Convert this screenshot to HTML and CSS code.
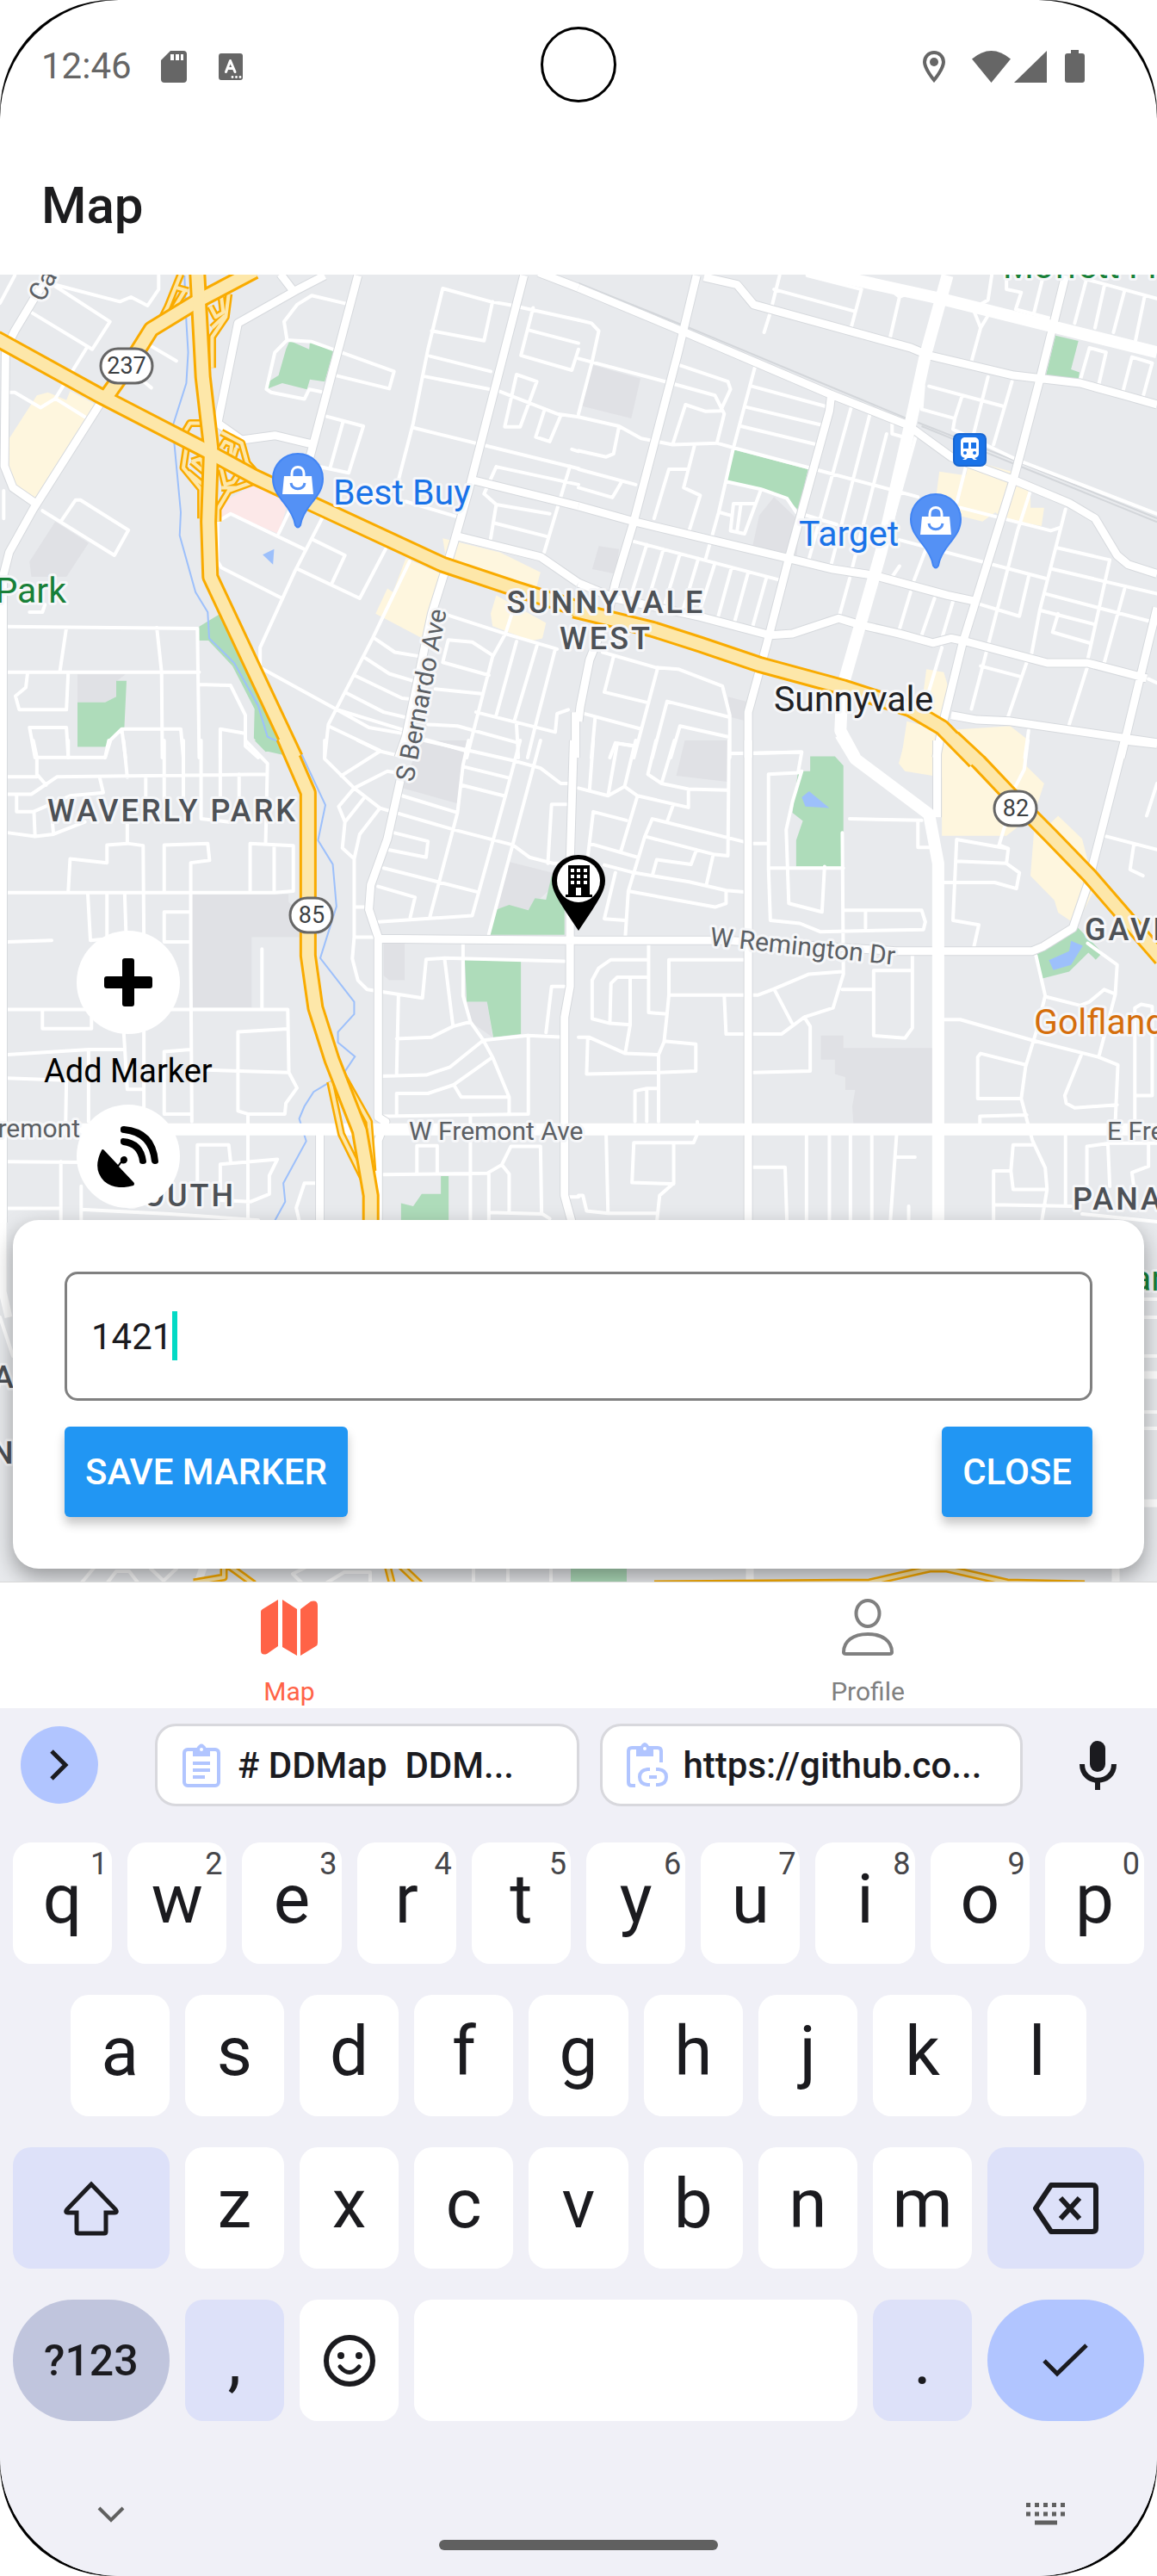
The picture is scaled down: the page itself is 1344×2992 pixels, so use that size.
FILE: index.html
```html
<!DOCTYPE html>
<html lang="en">
<head>
<meta charset="utf-8">
<meta name="viewport" content="width=device-width, initial-scale=1">
<title>Map</title>
<link rel="stylesheet" href="styles.css">
</head>
<body>
<div class="device">
<div class="screen">

<div class="status">
  <span class="time">12:46</span>
  <svg class="sd" viewBox="0 0 30 37" width="30" height="37"><path fill="#666" d="M11 0H26a4 4 0 0 1 4 4V33a4 4 0 0 1-4 4H4a4 4 0 0 1-4-4V11Z"/><path fill="#fff" d="M11 4h4v7h-4zM17 4h4v7h-4zM23 4h3v7h-3z"/></svg>
  <svg class="kb-a" viewBox="0 0 28 31" width="28" height="31"><rect width="28" height="31" rx="3" fill="#666"/><path d="M8.500 21.500 13.500 8.500 19 21.500M10.500 17.500H17" fill="none" stroke="#fff" stroke-width="3" stroke-linecap="round" stroke-linejoin="round"/><g fill="#fff"><circle cx="16" cy="27.500" r="1.400"/><circle cx="20.500" cy="27.500" r="1.400"/><circle cx="25" cy="27.500" r="1.400"/></g></svg>
  <span class="spacer"></span>
  <svg class="loc" viewBox="0 0 26 37" width="26" height="37"><path d="M13 2C7 2 2 6.500 2 13c0 8 11 21 11 21s11-13 11-21C24 6.500 19 2 13 2Z" fill="none" stroke="#666" stroke-width="4"/><circle cx="13" cy="13" r="5" fill="#666"/></svg>
  <svg class="wifi" viewBox="0 0 45 37" width="45" height="37"><path fill="#666" d="M0 9.500Q22.500-9.500 45 9.500L22.500 37Z"/></svg>
  <svg class="signal" viewBox="0 0 38 37" width="38" height="37"><path fill="#666" d="M38 0V37H0Z"/></svg>
  <svg class="battery" viewBox="0 0 23 38" width="23" height="38"><path fill="#666" d="M7 0h9v4h4a3 3 0 0 1 3 3v28a3 3 0 0 1-3 3H3a3 3 0 0 1-3-3V7a3 3 0 0 1 3-3h4z"/></svg>
  <span class="camera"></span>
</div>

<header class="header"><h1>Map</h1></header>

<main class="map">
<svg class="tiles" viewBox="0 319 1344 1518" preserveAspectRatio="xMidYMid slice" aria-label="Map of Sunnyvale">
<defs>
  <path id="nw-street" d="M150,30 325,85 355,70 400,98 430,45V0M85,120 250,240 298,150 150,35M235,235 150,400 110,430 40,380H20M150,400 230,460M410,230 478,278M385,340 410,365M40,0 0,90M10,700V790M940,92 845,65 805,95 770,150 778,210 845,215 1068,312 1055,368 910,325M778,210 745,250 722,370 735,380 825,402 838,370 870,378M1080,665 1120,480 1160,240 1200,42 1330,85 1380,95 1568,145M1335,85 1312,212 1170,180M1445,105 1412,260 1550,308 1568,240M1435,178 1568,220M1165,262 1330,312M1150,328 1350,375 1510,450 1568,460M1400,322 1455,345 1410,492 1368,492ZM1475,440 1452,525 1490,540 1520,455M1120,495 1568,628M1550,565 1568,572M885,458 985,490 945,642 860,620M930,475 895,625M1345,622 1568,680M1345,622 1312,710 1345,745 1330,855M1345,745 1490,775M1340,805 1480,848M1545,620 1475,900M1100,735 1240,785M115,765 310,910 348,828 218,730 205,730 165,800M590,800 625,775 825,890M785,765 755,840M875,785 800,960 705,1210V1275L910,1410 1100,1480M590,800V930L600,950 765,1050M850,860 935,910 900,1000M808,955 975,1050 1045,890M1110,930 1010,1180 890,1460 880,1568M20,1142 535,1148 540,1568M20,1290H540M180,1145 162,1290M425,1145 438,1290 440,1568M75,1290 70,1340 42,1368 52,1412H180L185,1290M95,1568 80,1470H180L185,1568M285,1568 300,1510 330,1475H490L497,1568M330,1475 340,1568M540,1330 625,1333 665,1430V1530L700,1568M597,1568V1475L660,1488M80,1095H115L122,1070M1190,1095 1370,1165 1510,1215M1390,1090 1370,1165 1335,1240 1265,1568M1335,1235 1280,1192 1215,1185 1200,1258 1325,1300M1180,1345 1305,1360M1400,1190 1345,1430M1455,1205 1395,1445M1505,1215 1450,1470 1430,1568M1290,1420 1505,1485 1510,1425 1540,1412M1160,1460 1240,1465 1405,1520M1400,1460 1405,1568M1155,1510 1260,1545M1015,1180 1070,1225 1145,1240M985,1240 1055,1295 1130,1322M960,1300 1090,1375 1130,1380M935,1355 1040,1420 1110,1440M910,1410 1000,1470 1095,1490M890,1465 1030,1545"/>
  <path id="ne-street" d="M0,145 35,155 55,180 35,290 0,450M0,270 235,345 370,390 395,450 375,545M270,290 405,345 412,370 385,440 345,442 290,420 255,550M0,460 110,490 170,530 255,550 375,545 420,560 640,630 920,720M110,490 95,580 75,590 0,570M0,630 155,680M115,675 92,722 0,690M480,290 420,560 380,770 345,920M470,360 668,425M455,428 655,485M440,490 640,548M545,0 520,120 503,185M530,45 745,115M620,0 767,45 740,165M845,200 870,70 850,50M870,70 890,60M740,425 625,920M790,450 685,940M835,515 740,960M850,480V515L880,525M915,520 850,800M400,670 495,695 565,725 590,770 700,810M495,695 450,840 412,830 420,742H480M440,745 430,830M382,770 412,780M315,550 285,690 330,715 300,830M295,630H245L205,790M150,865 545,990M185,875 140,1050M230,890 185,1070M275,905 230,1085M325,920 280,1100M370,935 325,1105M415,950 375,1125M460,965 420,1140M510,980 470,1150M735,985 705,1115M870,945 850,980M945,880 910,990M900,1030 870,1150M965,1050 930,1170M1015,1060 985,1180M870,860 1265,985M1035,755 1280,830 1305,820M1320,760 1250,1090 1225,1250M950,360 1150,425M935,360 930,435 1020,465 1015,500 1190,600 1568,775M1040,390 1020,465M1110,330 1070,520M1175,345 1125,550M1120,0 1110,80 1080,100M1070,110 1090,170 1065,280M1110,130 1090,170M1160,0V45L1200,55 1185,110 1280,140M1260,0 1235,120M1370,10 1568,75M1375,20 1345,155M1425,35 1400,170M1480,50 1450,185M1535,65 1510,210M1360,340 1385,235 1430,250 1410,355M1475,380 1500,265 1555,285 1530,395M1225,700 1190,830 1100,1250 1065,1410M1295,885 1440,925 1380,1250M1285,955 1568,1035M1265,1035 1550,1125M1255,1090 1400,1135M1300,1100 1285,1160 1385,1195M1480,1020 1425,1260M1090,1070 1195,1108 1220,980M1090,1270 1200,1305M1220,1240 1160,1450M1380,1270 1330,1460M985,1210 950,1350M1050,620 1025,740M0,1420 170,1475M65,1225 210,1275 270,1280 390,1335 410,1430V1568M95,1240 70,1355 190,1390M215,1275 150,1568M405,1435 240,1385 200,1568M405,1500 275,1465 250,1568M410,1555 605,1550M45,1440 35,1568M150,1530 100,1520 85,1568M1220,1480 1210,1568M1568,1325 1545,1312"/>
  <path id="sw-street" d="M90,0 100,55H285L295,0M185,0V55M335,0 345,120M445,0V200M497,0V200M545,0V255L620,265M597,0V200M648,110V190M100,55V110L125,145M20,118H100M20,175H85L155,118 720,110M665,0 725,75 720,330M45,175V232H90L190,180 280,170 270,120M20,300 95,312 145,305 230,265M92,232 95,312M140,240 145,305M345,270V335M395,120V200M185,490 190,385 290,398V340L345,335 388,342 390,640M445,490V340L563,335 568,390 517,398V720L520,1240M678,490V335L795,342V490L745,495M743,340V490M20,495H745M238,500 245,650 340,640M290,500V640M338,500 342,640M515,558H445V655H515M20,655 140,650M710,678V870M20,875H780L783,1080 805,1130 775,1180 772,1215H672L645,1205V948L780,938M115,875V937H248V880M20,1022 240,1005H335M335,940 345,1135H390M390,940V1240M240,1005V1240M515,1215H445V1012L515,1005M20,1098 180,1105 178,1240M560,1072 783,1080M672,1215V1568M20,1370 220,1372M165,1370V1568M20,1522H165M220,1525 460,1540 700,1560M220,1450V1560M535,1450V1315H620L625,1370M597,1490V1378L752,1362 730,1415V1475L680,1500 590,1495M855,1440H825L803,1520 812,1568M880,0V60L960,155 1030,220 1230,290 1390,340 1435,380 1500,400H1530M925,115 1030,35 970,0M1030,35 1075,48M1075,105 1050,100 960,155 918,215 935,265 928,350 960,385V640L955,710 970,780 995,810 1145,838 1155,712 1205,708 1530,718M985,190 935,265M1030,220 975,305 960,385M960,542H1000M960,640H1020M1150,0 1390,65 1465,90 1520,140H1550M1270,0 1255,80 1240,235 1165,575M1410,0 1370,180 1280,570 1025,590M1465,0 1325,630M1255,85 1380,122M1250,145 1365,180M1090,180 1240,235M1060,298 1160,328 1155,380 1050,355M1040,415 1295,493M1025,475 1125,510 1112,575M1535,208H1495L1485,400M1255,660V830L1275,915 1310,975 1335,1030 1380,1160V1215M1205,710 1228,930M1080,830 1075,1085M1075,970 1170,965 1228,930 1275,915M1030,1092 1155,1088 1220,1062 1310,975 1430,960 1530,965M1335,1030 1230,1120 1160,1148H1075V1220M1230,1120 1250,1160H1380M1432,960V1215L1040,1222M1480,950 1495,800H1530M1275,1220V1568M1040,1412 1320,1408 1360,1380 1385,1320H1465L1468,1540M1360,1380 1380,1410V1530M1325,1410V1560M1130,1410V1318H1185V1410M1325,1535 1470,1540 1490,1555M1540,1485H1568"/>
  <path id="se-street" d="M40,0 30,160M0,155 80,180 125,150 160,180 298,218V160M80,180 105,10 155,18M155,0 125,150M210,0 188,110 225,140 298,158 405,162M260,0 225,140M408,0 405,375 365,370 180,312M255,215 240,265M160,180 115,360M130,260 40,232 25,380M30,335 160,380M450,330 200,255 180,312 135,490 127,635M320,355 305,403 212,388 200,440M365,372 347,468M70,405 150,430 300,460 400,488 450,493M135,490 370,542 400,530V490M100,430 70,580 127,585M415,42H472L605,38 595,105 515,110V415H718M605,100 580,200 563,290 570,530 660,558 667,410M472,335H515M515,415 520,585 600,595 655,622 935,615 940,590 930,552H720M778,552V610M715,300 718,760 690,870 612,900 550,955H400L395,830M735,255 930,260M920,260V348H965M1140,340 1165,352 1160,400 1025,393M1025,322 1165,352M1160,400 1195,430 1187,482 1128,462H990M1025,322 1015,585 1085,600 1072,670M1140,340 1155,280M1218,0 1208,95 1180,160M1430,312 1568,355M1505,340 1495,420 1530,440M1568,140 1540,245M190,665V885L240,890M190,713H88L55,740 37,780V905L85,920 140,925V770M190,770H105L88,790 85,920M140,925 127,1015M245,828V713H450M245,828H487L530,808 625,760 715,752M245,828 240,890 232,980 217,1022V1240M530,808 578,918M715,810H800M800,748H905V935L885,968 800,960ZM905,700V748M612,900 628,930V1075L472,1080M0,965H28L127,1018 217,1022M25,970 22,1085 217,1080 318,1075V988L232,978M153,1240V1140L185,1132H217M185,1132V1240M322,1240V1280L312,1308H150L145,1438 258,1442V1310M258,1440 220,1480 212,1568M75,1285 80,1538H212M0,1480H12L22,1530 80,1538M472,1388H560L565,1568M618,1285V1568M680,1285V1568M737,1285V1568M795,1285V1568M862,1285 845,1568M862,1355H912M895,1515V1568M990,908H1035L1230,975 1410,1030 1462,1055 1455,1240M1240,700 1265,830 1240,950 1212,1060 1200,1165 1230,1300 1265,1390 1270,1460 1255,1568M1265,833 1360,862 1385,850 1425,810 1455,825M1380,660 1460,730 1455,825 1410,1030M1212,1055 1090,1018 1082,1030V1165H1200M1362,1025 1318,1155 1322,1180 1345,1195 1460,1185M1215,1218 1088,1222V1245M1235,1315H1178L1172,1400 1178,1460H1270M1172,1400H1125V1568M1125,1510 1335,1515M1320,1285V1510M1378,1450V1320L1440,1310H1568M1435,1315 1440,1450M1545,1310V1385L1500,1405 1505,1450M1508,1240V870L1525,858 1555,865V1155H1510M1365,1540 1568,1565"/>
  <path id="nw-road" d="M120,20 40,180 15,240 12,620 35,690 95,740M880,0 800,50 645,155 590,480 655,535 745,520 850,550M760,-5 795,50M970,0 840,590M1420,0 1270,700 1230,870 1170,1100 1100,1500 1080,1568M1280,665 1568,750M1230,845 1465,915 1568,1000M1460,-10 1568,40M280,400 90,760 25,900 8,980V1568M1560,1420V1568"/>
  <path id="ne-road" d="M0,40 280,180 680,385 890,485M320,0 270,250 150,800 100,1000 80,1100 30,1250 5,1400 0,1450M340,5 430,30 475,95 900,235 950,260 1180,325 1360,350 1480,390 1568,420M890,485 1010,590 1180,665 1330,740 1400,790 1460,910 1490,940 1568,970M1320,0 1250,340 1180,660 1040,1200 985,1470 970,1568M0,750 150,800 570,920 690,955 800,975 1000,1040 1080,1060M0,1000 100,1050 330,1110 520,1170 580,1165 705,1115 760,1135 870,1165 960,1195 1010,1180 1050,1190 1270,1260H1380L1540,1310M685,390 680,440 570,920 510,1200 460,1420V1568M1568,1080 1470,1568M1010,1430 1080,1445 1170,1450 1568,1520"/>
  <path id="sw-road" d="M1085,130 1050,320 1005,470 1000,550 1025,640V1225L1045,1240 1025,1300V1568M1025,645 1568,650M1555,0 1545,400V800L1530,900V1480L1550,1568M8,0V1568M867,1265V1568"/>
  <path id="se-road" d="M460,0V1568M972,0V250M1480,0 1380,470 1340,610 1260,670 1230,685H860L400,650H0M1480,0 1568,12"/>
  <path id="ne-ave" d="M620,-20 980,75 1568,250M1000,0 940,260 900,480 820,900 715,1340 710,1480 750,1568"/>
  <path id="sw-ave" d="M0,1265H1568"/>
  <path id="se-ave" d="M710,-20 750,60 950,240 975,400V1568M0,1265H1568"/>
  <path id="nw-ramp" d="M490,-5 455,100 430,160M510,50 480,40M500,50 470,110M620,60 612,135 575,200V300M570,100 585,135 605,120 600,70M575,170 610,130M555,480H515L495,520 520,545 555,565M600,510 655,545 670,610 700,650M600,560 610,540 628,550 625,580 600,600M640,560 630,600 660,620M505,560 497,625 545,695V790M520,605 545,595 555,640 520,605M560,690 510,640M600,630 610,680 632,672 650,640M700,665 620,700 590,760V800M600,690 640,690"/>
  <path id="sw-ramp" d="M895,1110 925,1280 995,1450M925,1080 1000,1240 1010,1400"/>
  <path id="nw-hwy" d="M690,-15 540,80 410,175 350,290 285,400M-10,205 270,390 560,570 690,655 850,745 1200,940 1400,1020 1580,1088"/>
  <path id="nw-hwy85" d="M535,-5 550,330 572,560 565,800 570,980 800,1568"/>
  <path id="ne-hwy" d="M-12,1088 200,1150 330,1200 490,1265 720,1340 900,1410 985,1470 1075,1580"/>
  <path id="sw-hwy" d="M770,-10 835,170V700L855,870 900,1040 975,1270 1005,1480V1568"/>
  <path id="se-hwy" d="M1015,-8 1085,70 1160,165 1280,310 1385,440 1580,710"/>
</defs>

<rect y="300" width="1344" height="1560" fill="#e8eaed"/>

<g transform="translate(0 320) scale(.42857 .35714)">
  <path class="built" d="M150,800 240,870 180,980H85L80,930ZM210,1297H340L315,1320V1370L285,1388H210Z"/>
  <path class="park" d="M785,212 838,240 840,215 905,242 880,345 840,338 832,370 765,350 725,368 728,345 755,325 775,240ZM540,1142 600,1098 800,1568 720,1546 688,1505 690,1410 630,1270 565,1187H540ZM210,1388H285L315,1370V1318H343L337,1470 300,1510 285,1532H210Z"/>
  <path class="shops" d="M25,530 100,390 130,380 180,405 190,375 260,420 90,750 25,690ZM1100,920 1195,970 1145,1180 1018,1100 1050,1018 1065,1030ZM1200,855 1355,900 1465,965 1450,1030 1210,930ZM1345,1040 1480,1130 1470,1180 1440,1188 1335,1140 1330,1100Z"/>
  <path class="hospital" d="M592,790 600,740 690,680 780,740 755,840 625,775Z"/>
  <path class="creek" d="M500,0 505,150 510,250 505,350 468,490 490,770 487,845 530,1030 563,1095 567,1180 635,1260 700,1400 725,1500 760,1520"/>
  <path class="water" d="M712,908 743,890 740,940Z"/>
</g>
<g transform="translate(672 320) scale(.42857 .35714)">
  <path class="built" d="M35,290 168,335 143,465 10,425ZM530,720 600,800 590,930 470,890 490,780ZM55,880 110,890 100,970 37,955ZM405,1370 455,1385V1450L410,1435Z"/>
  <path class="park" d="M422,567 622,630 597,765 562,720 400,668ZM1293,195 1355,213 1335,305 1358,315 1355,337 1267,325Z"/>
  <path class="shops" d="M978,638 1050,650 1060,600 1180,640 1225,700V755H1262L1255,815 1150,790 1130,770 1095,800 965,760ZM943,1280 990,1290 1005,1350 980,1470 930,1400ZM890,1450 985,1480 1170,1465 1213,1505 1210,1568H875Z"/>
  <path class="rail" d="M0,25 290,165 900,470M920,478 1200,610 1568,790M930,490 1568,802"/>
</g>
<g transform="translate(0 860) scale(.42857 .35714)">
  <path class="built" d="M520,500H782V525L812,560V640H682V868H520ZM1140,0H1270L1240,205 1090,155ZM1380,395 1530,440 1430,552 1345,545ZM1040,660H1097V780H1055L1040,765ZM1265,850H1320L1335,965 1275,915Z"/>
  <path class="park" d="M1345,550 1380,535 1432,552 1450,513 1480,518 1495,440 1530,445V632H1322ZM1260,715H1412V955L1337,965 1320,850H1265ZM1087,1568V1505L1120,1515 1143,1475H1195V1417H1216V1568ZM210,0H290L285,20H210ZM690,0 720,37 755,28 745,0Z"/>
  <path class="creek" d="M800,0 882,210 862,325 902,403 912,540 868,708 960,850V890L916,948V982L962,1028 930,1085 893,1112 850,1143 825,1190 811,1230 830,1303 768,1440 773,1500 742,1568"/>
</g>
<g transform="translate(672 860) scale(.42857 .35714)">
  <path class="built" d="M657,960H718V1000H965V1245H745L742,1190 750,1137H723V1095L695,1085V1038H657ZM288,0H408V135L265,115Z"/>
  <path class="park" d="M628,52H695L718,82V410H590V325L608,262 580,235 595,100H628ZM1238,700 1350,605 1420,690 1402,713 1382,690 1330,752 1255,775Z"/>
  <path class="shops" d="M885,0H1213L1215,85 1262,140 1235,240 1160,310H985V120L885,100 868,75ZM1235,290 1270,280 1300,245 1365,320 1378,380 1400,480 1350,600 1300,560 1290,520 1225,440Z"/>
  <path class="water" d="M605,185 625,165 680,220 615,215ZM1275,715 1330,685 1335,652 1367,668 1335,730 1287,747Z"/>
</g>

<g class="lines street">
  <use href="#nw-street" transform="translate(0 320) scale(.42857 .35714)"/>
  <use href="#ne-street" transform="translate(672 320) scale(.42857 .35714)"/>
  <use href="#sw-street" transform="translate(0 860) scale(.42857 .35714)"/>
  <use href="#se-street" transform="translate(672 860) scale(.42857 .35714)"/>
  <path d="M1325,1509h20M1325,1530h20M1325,1575h20M1325,1640h20M1325,1659h20M0,1530 15,1575M95,1838 110,1820M125,1838 135,1825H150L160,1838M175,1822 190,1836 205,1822M360,1818 340,1828 350,1838M380,1838 400,1826H430V1838M550,1818V1838M590,1818V1838M640,1818V1838"/>
</g>
<g class="lines casing">
  <use href="#nw-road" transform="translate(0 320) scale(.42857 .35714)"/>
  <use href="#ne-road" transform="translate(672 320) scale(.42857 .35714)"/>
  <use href="#sw-road" transform="translate(0 860) scale(.42857 .35714)"/>
  <use href="#se-road" transform="translate(672 860) scale(.42857 .35714)"/>
</g>
<g class="lines road">
  <use href="#nw-road" transform="translate(0 320) scale(.42857 .35714)"/>
  <use href="#ne-road" transform="translate(672 320) scale(.42857 .35714)"/>
  <use href="#sw-road" transform="translate(0 860) scale(.42857 .35714)"/>
  <use href="#se-road" transform="translate(672 860) scale(.42857 .35714)"/>
  <path d="M3,1417V1500L10,1530M1325,1597h20M1325,1746h20M230,1838 238,1815M871,1818V1838M1296,1818V1838"/>
</g>
<g class="lines ave">
  <use href="#ne-ave" transform="translate(672 320) scale(.42857 .35714)"/>
  <use href="#sw-ave" transform="translate(0 860) scale(.42857 .35714)"/>
  <use href="#se-ave" transform="translate(672 860) scale(.42857 .35714)"/>
</g>
<g class="lines ramp-edge">
  <use href="#nw-ramp" transform="translate(0 320) scale(.42857 .35714)"/>
  <use href="#sw-ramp" transform="translate(0 860) scale(.42857 .35714)"/>
  <path d="M225,1838 260,1832V1818M265,1818 295,1840M450,1818 455,1838M465,1818 488,1840M760,1840 1010,1838 1080,1822H1100L1170,1838 1260,1840"/>
</g>
<g class="lines ramp">
  <use href="#nw-ramp" transform="translate(0 320) scale(.42857 .35714)"/>
  <use href="#sw-ramp" transform="translate(0 860) scale(.42857 .35714)"/>
  <path d="M225,1838 260,1832V1818M265,1818 295,1840M450,1818 455,1838M465,1818 488,1840M760,1840 1010,1838 1080,1822H1100L1170,1838 1260,1840"/>
</g>
<g class="lines hwy-edge">
  <use href="#nw-hwy" transform="translate(0 320) scale(.42857 .35714)"/>
  <use href="#ne-hwy" transform="translate(672 320) scale(.42857 .35714)"/>
  <use href="#se-hwy" transform="translate(672 860) scale(.42857 .35714)"/>
  <use href="#nw-hwy85" transform="translate(0 320) scale(.42857 .35714)"/>
  <use href="#sw-hwy" transform="translate(0 860) scale(.42857 .35714)"/>
</g>
<g class="lines hwy">
  <use href="#nw-hwy" transform="translate(0 320) scale(.42857 .35714)"/>
  <use href="#ne-hwy" transform="translate(672 320) scale(.42857 .35714)"/>
  <use href="#se-hwy" transform="translate(672 860) scale(.42857 .35714)"/>
  <use href="#nw-hwy85" transform="translate(0 320) scale(.42857 .35714)"/>
  <use href="#sw-hwy" transform="translate(0 860) scale(.42857 .35714)"/>
</g>
<path class="park" d="M663,1818H728V1838H663Z"/>

<g class="shield"><rect x="117" y="405" width="60" height="40" rx="20"/><rect x="337" y="1043" width="49" height="40" rx="20"/><rect x="1155" y="919" width="49" height="40" rx="20"/>
<text x="147" y="434">237</text><text x="362" y="1072">85</text><text x="1180" y="948">82</text></g>

<g class="label area">
  <text x="704" y="712" text-anchor="middle">SUNNYVALE</text><text x="704" y="754" text-anchor="middle">WEST</text>
  <text x="55" y="954">WAVERLY PARK</text><text x="274" y="1401" text-anchor="end">SOUTH</text>
  <text x="1260" y="1092">GAVILAN</text><text x="1246" y="1405">PANAMA</text>
  <text x="-8" y="1612">A</text><text x="-10" y="1700">N</text>
</g>
<g class="label street-name">
  <text x="475" y="1324">W Fremont Ave</text><text x="93" y="1321" text-anchor="end">W Fremont</text><text x="1286" y="1324">E Fremont Ave</text>
  <text transform="translate(480 909) rotate(-79)">S Bernardo Ave</text>
  <text transform="translate(50 352) rotate(-62)">Castro</text>
  <text transform="translate(824 1098) rotate(6)">W Remington Dr</text>
</g>
<g class="label place">
  <text class="shop" x="387" y="586">Best Buy</text><text class="shop" x="928" y="634">Target</text>
  <text class="city" x="899" y="826">Sunnyvale</text>
  <text class="green" x="77" y="700" text-anchor="end">Park</text><text class="green" x="1165" y="323">Moffett Field</text><text class="green" x="1372" y="1499" text-anchor="end">Park</text>
  <text class="fun" x="1201" y="1201">Golfland</text>
</g>

<g id="shop-pin"><path d="M346 527c-16.500 0-29 13-29 29 0 12 6 19 12 27 8 10 13 19 14 27q3 5 6 0c1-8 6-17 14-27 6-8 12-15 12-27 0-16-12.500-29-29-29Z" fill="#5491f5" stroke="#4285f4" stroke-width="2"/><path d="M330 553h32l2 21h-36z" fill="#fff"/><path d="M339 555v-5c0-10 14-10 14 0v5" fill="none" stroke="#fff" stroke-width="3"/><path d="M338 561c1 9 15 9 16 0" fill="none" stroke="#5491f5" stroke-width="3"/></g>
<use href="#shop-pin" x="741" y="47"/>
<g><rect x="1108" y="504" width="37" height="37" rx="6" fill="#1a73e8" stroke="#1967d2" stroke-width="2"/><path d="M1120 508h13q4 1 4 5v14q0 4-5 5l3 2h-4l-2-2h-5l-2 2h-4l3-2q-5-1-5-5v-14q0-4 4-5z" fill="#fff"/><path d="M1119 514h6v7h-6zM1128 514h6v7h-6z" fill="#1a73e8"/><circle cx="1121" cy="526" r="2" fill="#1a73e8"/><circle cx="1132" cy="526" r="2" fill="#1a73e8"/></g>

<g><path d="M672 993c-17.500 0-31 13.500-31 30 0 11 8 23 15 34l16 24 16-24c7-11 15-23 15-34 0-16.500-13.500-30-31-30Z"/><circle cx="672" cy="1023" r="25" fill="#fff"/><path d="M660 1005h25v35h-25zM657 1039h31v3h-31z"/><path fill="#fff" d="M663 1009h4v4h-4zM670 1009h4v4h-4zM678 1009h4v4h-4zM663 1016h4v4h-4zM670 1016h4v4h-4zM678 1016h4v4h-4zM663 1023h4v4h-4zM670 1023h4v4h-4zM678 1023h4v4h-4zM669 1031h6v9h-6z"/></g>
</svg>

<div class="actions">
  <button class="fab" aria-label="Add marker"><svg viewBox="0 0 56 56" width="56" height="56"><path d="M24 0h8q3 0 3 3v18h18q3 0 3 3v8q0 3-3 3H35v18q0 3-3 3h-8q-3 0-3-3V35H3q-3 0-3-3v-8q0-3 3-3h18V3q0-3 3-3z"/></svg></button>
  <span class="caption">Add Marker</span>
  <button class="fab" aria-label="Locate"><svg viewBox="0 0 72 72" width="72" height="72"><path d="M5 29Q-6 51 8 65 21 76 42 70 44 68 42 66L25 48 28 44Q33 46 35 41 35 36 31 36 26 37 27 42L24 46 8 29Q6 27 5 29Z"/><path d="M27 4Q27 1 31 1 68 4 71 42 71 45 67 45 64 45 63 42 60 12 31 9 27 9 27 6ZM27 18Q27 15 30 15 54 17 57 42 57 45 53 45 49 45 49 42 47 25 30 23 27 22 27 20Z"/></svg></button>
</div>

<form class="card" onsubmit="return false">
  <div class="field"><input type="text" value="1421" aria-label="Marker name"><span class="caret"></span></div>
  <div class="buttons"><button class="btn" type="submit">SAVE MARKER</button><button class="btn" type="button">CLOSE</button></div>
</form>
</main>

<nav class="tabs">
  <a href="#map" class="tab active"><svg viewBox="0 0 68 68" width="68" height="68"><path fill="currentColor" d="M1 15Q1 13 3 12L21 1V55L8 64Q1 66 1 60ZM26 1 43 12V66L26 56ZM47 12 59 3Q67 1 67 8V51Q67 54 65 55L47 66Z"/></svg><span>Map</span></a>
  <a href="#profile" class="tab"><svg viewBox="0 0 68 68" width="68" height="68"><g fill="none" stroke="currentColor" stroke-width="4"><ellipse cx="34" cy="17" rx="13.500" ry="15"/><path d="M34 41C17 41 6 49 6 62Q6 64 9 64H59Q62 64 62 62C62 49 51 41 34 41Z"/></g></svg><span>Profile</span></a>
</nav>

<section class="keyboard" aria-label="Keyboard">
  <div class="suggest">
    <button class="expand" aria-label="More"><svg viewBox="0 0 24 36" width="24" height="36"><path d="M3 2 19 18 3 34" fill="none" stroke="#1b1b1f" stroke-width="5"/></svg></button>
    <button class="chip"><svg viewBox="0 0 44 51" width="44" height="51"><g fill="none" stroke="#b1c5ff" stroke-width="4"><rect x="2" y="7" width="40" height="42" rx="4"/><path d="M12 23H32M12 31H32M12 39H26"/></g><path fill="#b1c5ff" d="M12 6h4q6-11 12 0h4v9H12z"/><circle cx="22" cy="7" r="2" fill="#fff"/></svg><span># DDMap&nbsp; DDM...</span></button>
    <button class="chip"><svg viewBox="0 0 48 54" width="48" height="54"><g fill="none" stroke="#b1c5ff" stroke-width="4"><path d="M10 51H6q-4 0-4-4V11q0-4 4-4H36q4 0 4 4V24"/><path d="M27 32H24q-9 1-9 9t9 9h3M34 32h3q9 1 9 9t-9 9h-3M26 41h9"/></g><path fill="#b1c5ff" d="M11 7h4q6-12 12 0h4v10H11z"/><circle cx="21" cy="8" r="2" fill="#fff"/></svg><span>https://github.co...</span></button>
    <button class="mic" aria-label="Voice input"><svg viewBox="0 0 43 57" width="43" height="57"><rect x="12" width="18" height="36" rx="9" fill="#1b1b1f"/><path d="M3 27C3 52 40 52 40 27M21 46V57" fill="none" stroke="#1b1b1f" stroke-width="6"/></svg></button>
  </div>
  <div class="keys">
    <button class="key">q<sup>1</sup></button><button class="key">w<sup>2</sup></button><button class="key">e<sup>3</sup></button><button class="key">r<sup>4</sup></button><button class="key">t<sup>5</sup></button><button class="key">y<sup>6</sup></button><button class="key">u<sup>7</sup></button><button class="key">i<sup>8</sup></button><button class="key">o<sup>9</sup></button><button class="key">p<sup>0</sup></button>
    <button class="key indent">a</button><button class="key">s</button><button class="key">d</button><button class="key">f</button><button class="key">g</button><button class="key">h</button><button class="key">j</button><button class="key">k</button><button class="key">l</button>
    <button class="key wide tint first" aria-label="Shift"><svg viewBox="0 0 68 66" width="68" height="66"><path d="M34 5 62 34Q65 38 61 38H51V60Q51 62 49 62H19Q17 62 17 60V38H7Q3 38 6 34Z" fill="none" stroke="#1b1b1f" stroke-width="5"/></svg></button>
    <button class="key">z</button><button class="key">x</button><button class="key">c</button><button class="key">v</button><button class="key">b</button><button class="key">n</button><button class="key">m</button>
    <button class="key wide tint" aria-label="Backspace"><svg viewBox="0 0 76 60" width="76" height="60"><path d="M21 3H69Q73 3 73 7V53Q73 57 69 57H21L3 30ZM32 18 54 42M54 18 32 42" fill="none" stroke="#1b1b1f" stroke-width="6" stroke-linejoin="round"/></svg></button>
    <button class="key wide mode first">?123</button><button class="key tint low">,</button>
    <button class="key" aria-label="Emoji"><svg viewBox="0 0 60 60" width="60" height="60"><circle cx="30" cy="30" r="27" fill="none" stroke="#1b1b1f" stroke-width="6"/><circle cx="20" cy="24" r="4" fill="#1b1b1f"/><circle cx="41" cy="24" r="4" fill="#1b1b1f"/><path d="M19 37Q30 50 41 37" fill="none" stroke="#1b1b1f" stroke-width="5" stroke-linecap="round"/></svg></button>
    <button class="key space" aria-label="Space"></button><button class="key tint low">.</button>
    <button class="key wide enter" aria-label="Done"><svg viewBox="0 0 54 40" width="54" height="40"><path d="M2 20 17 35 51 2" fill="none" stroke="#1b1b1f" stroke-width="5"/></svg></button>
  </div>
  <div class="bottom">
    <svg viewBox="0 0 32 28" width="32" height="28"><path d="M2 7 16 21 30 7" fill="none" stroke="#606060" stroke-width="4"/></svg>
    <svg viewBox="0 0 46 28" width="46" height="28"><path d="M0 3.500H46M0 14H46" fill="none" stroke="#606060" stroke-width="5" stroke-dasharray="5"/><path d="M10 24H36" stroke="#606060" stroke-width="5"/></svg>
  </div>
  <div class="handle"></div>
</section>

</div>
</div>
</body>
</html>
```
FILE: styles.css
```css
* { box-sizing: border-box; }
body { margin: 0; background: #fff; font-family: Roboto, sans-serif; color: #1b1b1f; }
button { border: 0; padding: 0; margin: 0; background: none; font: inherit; color: inherit; }
svg { display: block; flex: none; }

.device { background: #000; border-radius: 130px; overflow: hidden; }
.screen { min-height: 100vh; display: flex; flex-direction: column; background: #fff; border-radius: 138px; overflow: hidden; }

.status { position: relative; display: flex; align-items: center; height: 154px; padding: 0 84px 0 48px; }
.time { font-size: 42px; line-height: 50px; color: #666; }
.sd { margin-left: 34px; }
.kb-a { margin-left: 37px; }
.spacer { flex: 1; }
.wifi { margin-left: 31px; }
.signal { margin-left: 4px; }
.battery { margin-left: 21px; }
.camera { position: absolute; left: 50%; top: 31px; width: 88px; height: 88px; margin-left: -44px; border: 3px solid #000; border-radius: 50%; }

.header { display: flex; align-items: center; height: 165px; padding: 4px 48px 0; }
.header h1 { margin: 0; font-size: 60px; line-height: 72px; font-weight: 500; color: #1c1c1e; }

.map { position: relative; flex: 1; min-height: 1000px; display: flex; flex-direction: column; justify-content: flex-end; overflow: hidden; background: #e8eaed; }
.tiles { position: absolute; inset: 0; width: 100%; height: 100%; }
.tiles path { vector-effect: non-scaling-stroke; }
.built { fill: #e0e1e5; }
.park { fill: #aedcba; }
.shops { fill: #fef6de; }
.hospital { fill: #fce8e8; }
.water { fill: #9dc0fb; }
.creek { fill: none; stroke: #9dc0fb; stroke-width: 2px; }
.rail { fill: none; stroke: #d3d6da; stroke-width: 2px; }
.lines { fill: none; stroke: #fff; stroke-linejoin: round; }
.street { stroke-width: 4px; stroke-linecap: round; }
.casing { stroke: #d6d9dd; stroke-width: 11px; }
.road { stroke-width: 9px; }
.ave { stroke-width: 14px; }
.ramp-edge { stroke: #f9ab00; stroke-width: 9px; }
.ramp { stroke: #fde7a9; stroke-width: 4px; }
.hwy-edge { stroke: #f9ab00; stroke-width: 20px; }
.hwy { stroke: #fde7a9; stroke-width: 14px; }
.shield rect { fill: #fff; stroke: #666; stroke-width: 3px; }
.shield text { font-size: 27px; text-anchor: middle; fill: #3c4043; }
.label text { paint-order: stroke; stroke: #f6f7f9; stroke-width: 6px; stroke-linejoin: round; }
.area { font-size: 36px; font-weight: 500; letter-spacing: 3px; fill: #4d5156; }
.street-name { font-size: 30px; fill: #5b5f64; }
.place { font-size: 41px; }
.shop { fill: #1a73e8; }
.city { fill: #202124; }
.green { fill: #188038; }
.fun { fill: #d56e0c; }

.actions { position: relative; align-self: flex-start; display: flex; flex-direction: column; align-items: center; margin: 0 0 14px 51px; }
.fab { display: flex; align-items: center; justify-content: center; width: 120px; height: 120px; border-radius: 50%; background: #fff; }
.caption { padding: 20px 0 16px; font-size: 38px; line-height: 46px; color: #000; }

.card { position: relative; margin: 0 15px 15px; padding: 60px; border-radius: 30px; background: #fff; box-shadow: 0 10px 24px rgba(0, 0, 0, .35); }
.field { position: relative; }
.field input { display: block; width: 100%; height: 150px; padding: 0 28px; border: 3px solid #808080; border-radius: 15px; background: #fff; font: 42px/50px Roboto, sans-serif; color: #1b1b1f; outline: 0; }
.caret { position: absolute; left: 125px; top: 46px; width: 6px; height: 57px; background: #03dac5; }
.buttons { display: flex; justify-content: space-between; margin-top: 30px; }
.btn { height: 105px; padding: 0 24px; border-radius: 6px; background: #2196f3; color: #fff; font-size: 42px; font-weight: 500; box-shadow: 0 8px 12px rgba(0, 0, 0, .22); }

.tabs { display: flex; padding: 19px 0 1px; border-top: 1px solid #d8d8d8; background: #fff; }
.tab { flex: 1; display: flex; flex-direction: column; align-items: center; gap: 22px; font-size: 30px; line-height: 36px; color: #808080; text-decoration: none; }
.tab.active { color: #ff6347; }

.keyboard { padding-top: 18px; background: #f0f0f7; }
.suggest { display: flex; align-items: center; height: 96px; padding: 0 47px 0 24px; }
.expand { display: flex; align-items: center; justify-content: center; width: 90px; height: 90px; margin-right: 66px; border-radius: 50%; background: #b1c5ff; }
.chip { flex: 1 1 0; min-width: 0; display: flex; align-items: center; gap: 20px; height: 96px; padding: 0 29px; border: 3px solid #d8d8dd; border-radius: 24px; background: #fff; font-size: 42px; font-weight: 500; white-space: nowrap; }
.chip + .chip { margin-left: 24px; padding-left: 28px; gap: 18px; }
.mic { margin-left: 66px; }
.keys { display: grid; grid-template-columns: repeat(20, 1fr); grid-auto-rows: 141px; gap: 36px 18px; padding: 42px 15px 0; }
.key { position: relative; grid-column-end: span 2; min-width: 0; display: flex; align-items: center; justify-content: center; padding-bottom: 10px; border-radius: 21px; background: #fff; font-size: 80px; line-height: 94px; }
.key:has(svg) { padding-bottom: 0; }
.key sup { position: absolute; top: 7px; right: 5px; font-size: 36px; line-height: 36px; color: #46464a; }
.key.indent { grid-column-start: 2; }
.key.wide { grid-column-end: span 3; }
.key.space { grid-column-end: span 8; }
.key.first { grid-column-start: 1; }
.key.tint { background: #dde1f9; }
.key.low { padding-bottom: 0; }
.key.mode { border-radius: 71px; background: #c0c5dd; font-size: 50px; font-weight: 500; padding-bottom: 0; }
.key.enter { border-radius: 71px; background: #b1c5ff; }
.bottom { display: flex; justify-content: space-between; padding: 94px 106px 0 113px; }
.handle { width: 324px; height: 12px; margin: 16px auto 30px; border-radius: 6px; background: #606060; }
```
